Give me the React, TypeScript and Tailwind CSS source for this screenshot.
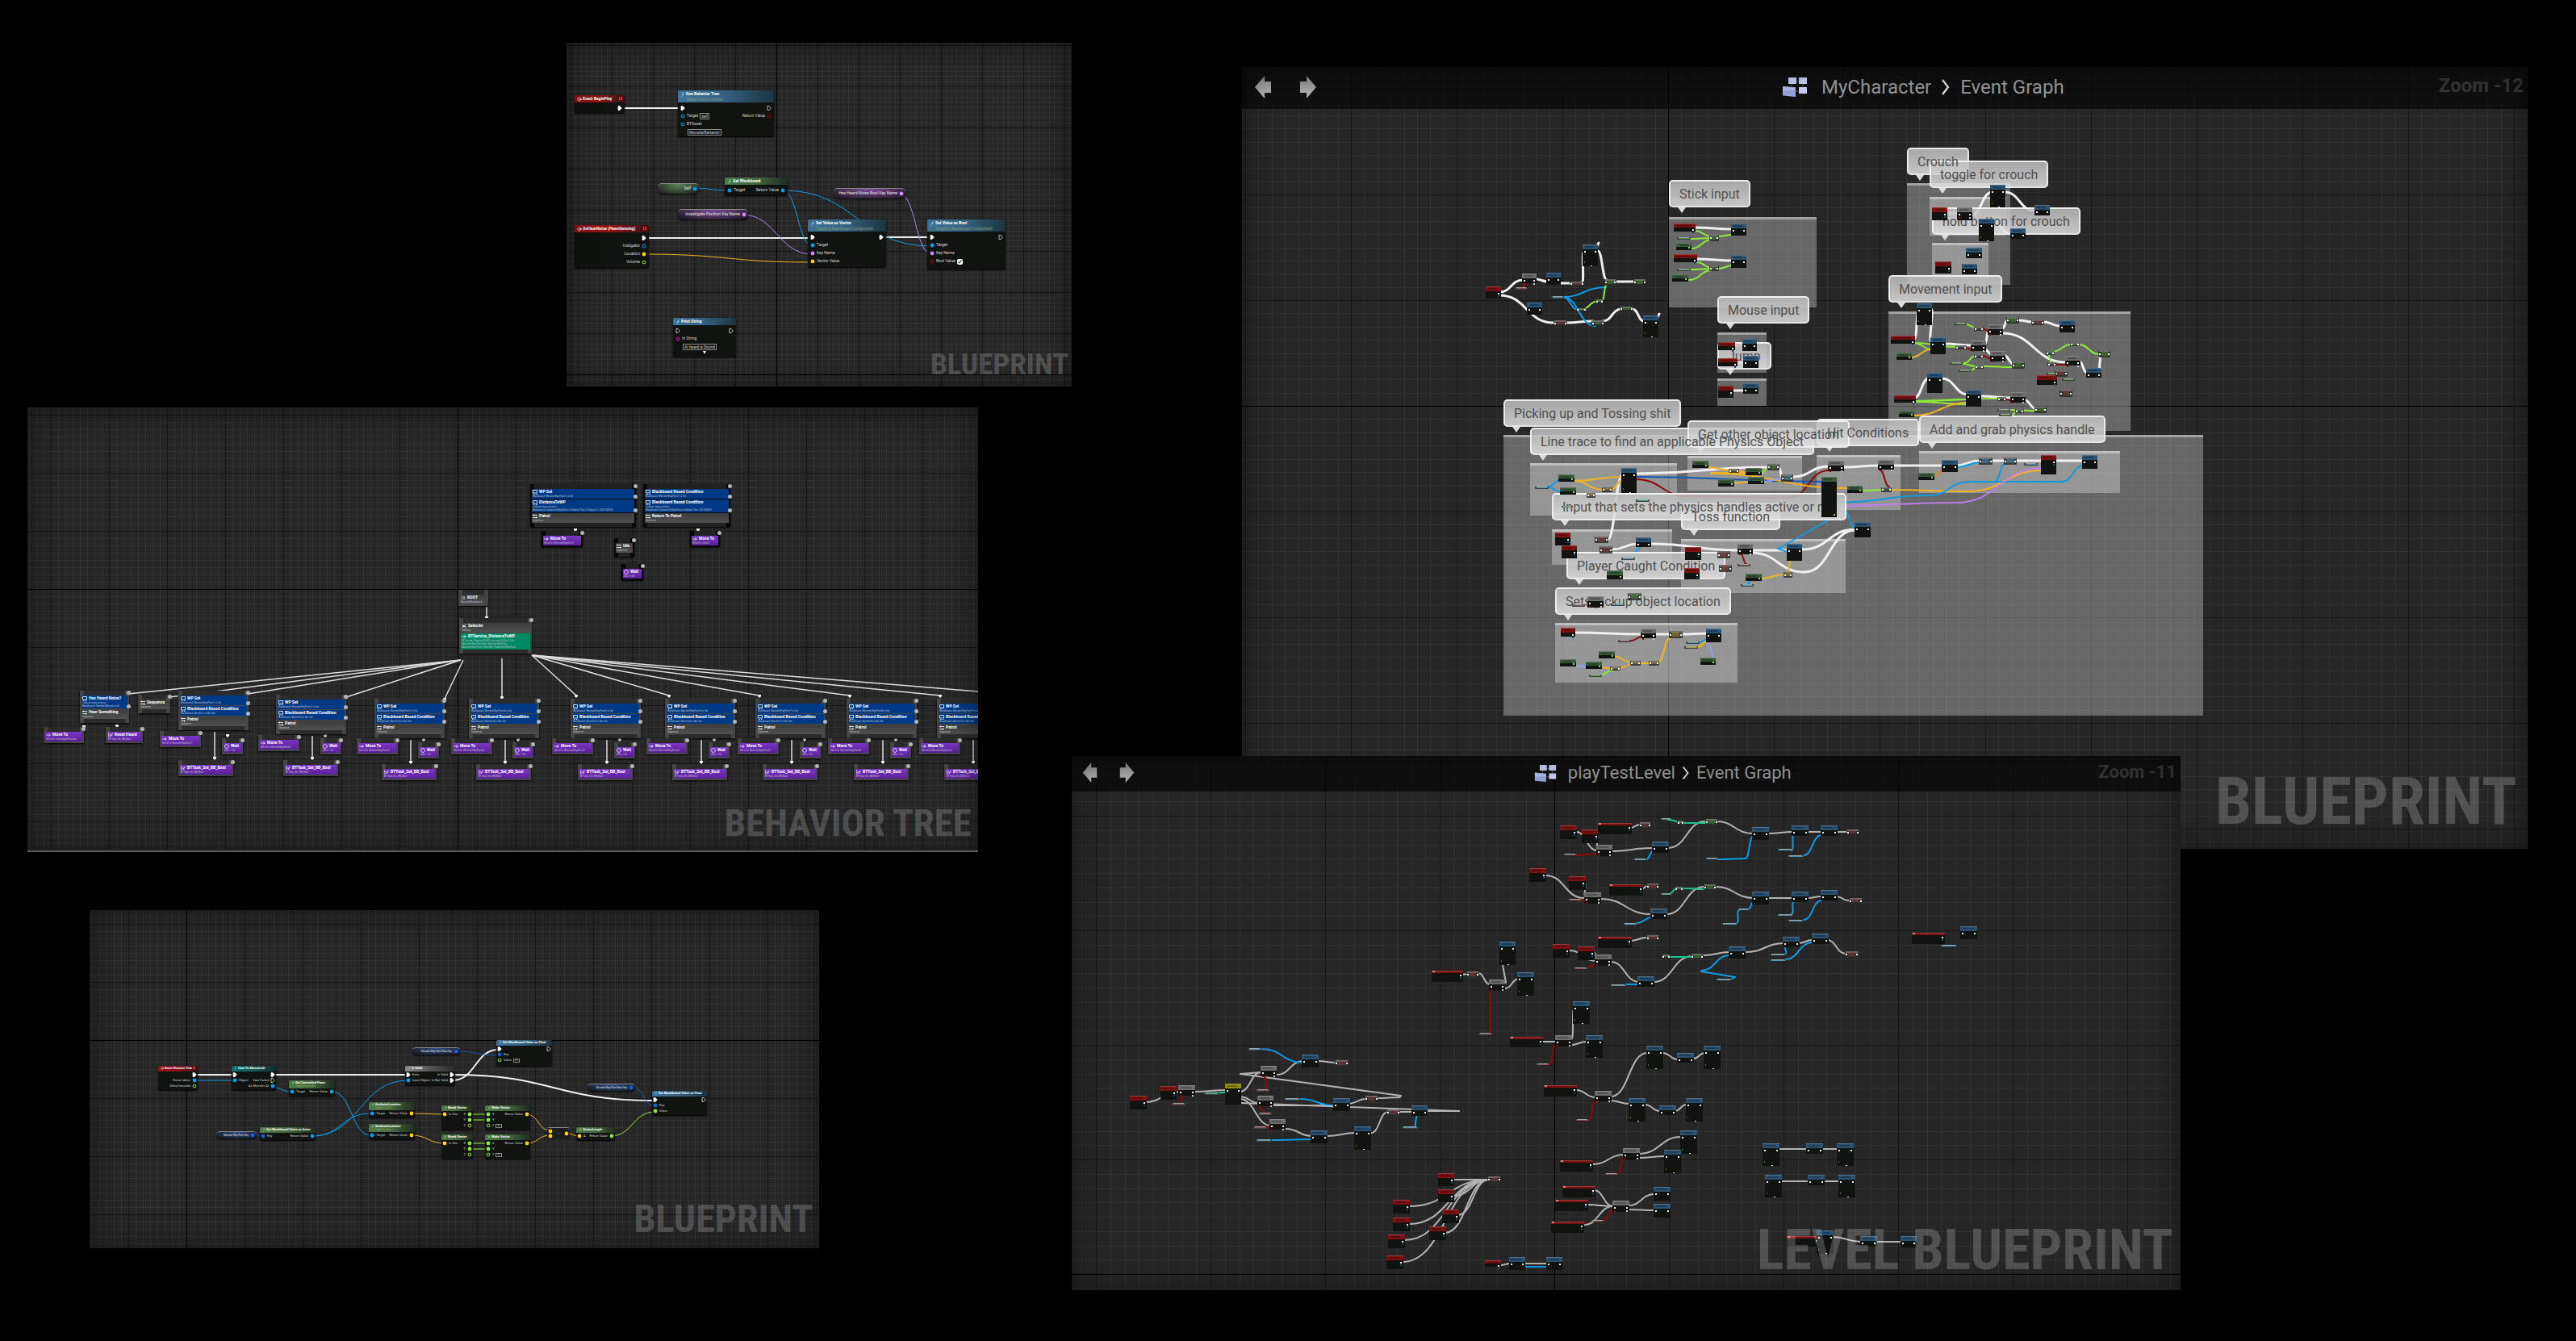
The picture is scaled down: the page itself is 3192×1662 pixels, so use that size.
import React from 'react';

/* ---------- coordinates ---------- */

// A sector of a graph: its own units (sx, sy) and its origin on the canvas.
type Sector = { ox: number; oy: number; sx: number; sy: number };

const px = (s: Sector, x: number) => Math.round(s.ox + x * s.sx);
const py = (s: Sector, y: number) => Math.round(s.oy + y * s.sy);

const rowsOf = (src: string) =>
  src
    .split(/[\n;]/)
    .map((l) => l.trim())
    .filter(Boolean)
    .map((l) => l.split(/\s+/));

const WIRE: Record<string, string> = {
  w: '#f0f0f0',
  b: '#0f9be6',
  B: '#1458b8',
  g: '#8fe93a',
  y: '#f0b323',
  r: '#8c0a0c',
  p: '#bd7ff0',
  q: '#93a0ee',
  o: '#f07a1a',
  t: '#1fc48c',
};

/* ---------- canvas pieces ---------- */

function Grid({ id, step, cells, x, y }: { id: string; step: number; cells: number; x: number; y: number }) {
  const minors = Array.from({ length: cells - 1 }, (_, i) => Math.round(((i + 1) * step) / cells));
  return (
    <svg className="absolute inset-0 size-full" aria-hidden="true">
      <defs>
        <pattern id={id} x={x} y={y} width={step} height={step} patternUnits="userSpaceOnUse">
          {minors.map((m) => (
            <path key={m} d={`M${m} 0h1v${step}h-1zM0 ${m}h${step}v1h-${step}z`} fill="#323232" />
          ))}
          <path d={`M0 0h${step}v1h-${step}zM0 0h1v${step}h-1z`} fill="#171717" />
        </pattern>
      </defs>
      <rect width="100%" height="100%" fill={`url(#${id})`} />
      <rect x={x} width="1" height="100%" fill="#000" />
      <rect y={y} width="100%" height="1" fill="#000" />
    </svg>
  );
}

function Wires({ s, src, width, dim }: { s: Sector; src: string; width: number; dim?: boolean }) {
  return (
    <svg className="absolute inset-0 size-full" fill="none" strokeWidth={width} aria-hidden="true">
      {rowsOf(src).map(([c, ...n], i) => {
        const straight = c.endsWith('-');
        const key = c[0];
        const [x1, y1, x2, y2] = [px(s, +n[0]), py(s, +n[1]), px(s, +n[2]), py(s, +n[3])];
        const k = Math.max(Math.abs(x2 - x1) / 2, 4);
        const d = straight ? `M${x1} ${y1}L${x2} ${y2}` : `M${x1} ${y1}C${x1 + k} ${y1} ${x2 - k} ${y2} ${x2} ${y2}`;
        return <path key={i} d={d} stroke={dim && key === 'w' ? '#b4b4b4' : WIRE[key]} strokeLinecap="round" />;
      })}
    </svg>
  );
}

const HEAD: Record<string, string> = {
  red: '#7d1012',
  blue: '#2a5170',
  green: '#39593a',
  gray: '#6b6b6b',
  yel: '#8d8a0c',
};
const TINT: Record<string, string> = { mg: '#4b8a35', mr: '#8a3a3c', mb: '#4a8fbb', my: '#b08a2a', m: '#555' };
const PILL: Record<string, string> = { pr: '#8a5050', pb: '#4f96b5', pg: '#5d9440', pt: '#3fa080', py: '#b39440' };

// Far-zoom nodes: a coloured cap, a dark body and the exec pins.
function MiniNodes({ s, src }: { s: Sector; src: string }) {
  return (
    <svg className="pointer-events-none absolute inset-0 z-20 size-full" aria-hidden="true">
      {rowsOf(src).map(([kind, ...n], i) => {
        const x = px(s, +n[0]);
        const y = py(s, +n[1]);
        const w = Math.round(+n[2] * s.sx);
        const h = Math.round(+n[3] * s.sy);
        if (PILL[kind]) {
          return (
            <g key={i}>
              <rect x={x} y={y} width={w} height={Math.max(h, 2)} rx="1" fill="#3c4040" />
              <rect x={x + 2} y={y} width={w - 4} height="1" fill="#9aa4a4" />
              <rect x={x + 2} y={y + 1} width={w - 3} height="1" fill={PILL[kind]} />
            </g>
          );
        }
        if (TINT[kind]) {
          return (
            <g key={i}>
              <rect x={x} y={y} width={w} height={h} rx="1" fill="#2c2e2b" fillOpacity="0.85" />
              <rect x={x + 1} y={y} width={w - 2} height="2" fill="#858585" fillOpacity="0.7" />
              <rect x={x + Math.round(w / 4)} y={y + 1} width={Math.round(w / 2)} height={Math.max(h - 3, 2)} fill={TINT[kind]} fillOpacity="0.5" />
              <rect x={x + 1} y={y + Math.round(h / 2) - 1} width="2" height="2" fill="#eee" />
              <rect x={x + w - 3} y={y + Math.round(h / 2) - 1} width="2" height="2" fill="#eee" />
            </g>
          );
        }
        const cap = w > 34 && h < 16 ? 3 : Math.min(6, Math.round(h / 2));
        const pin = y + cap + 2;
        return (
          <g key={i}>
            <rect x={x} y={y} width={w} height={h} fill="#101310" />
            <rect x={x} y={y} width={w} height={cap} fill={HEAD[kind]} />
            <rect x={x} y={y} width={w} height="1" fill="#fff" fillOpacity="0.18" />
            {cap > 3 ? (
              <rect x={x + 3} y={y + 2} width={w - 8} height="2" fill="#000" fillOpacity="0.25" />
            ) : (
              <rect x={x + 1} y={y} width="3" height="2" fill="#e08080" />
            )}
            {kind !== 'red' && kind !== 'green' && <rect x={x + 2} y={pin} width="2" height="2" fill="#eee" />}
            {kind !== 'green' && <rect x={x + w - 4} y={pin} width="2" height="2" fill="#eee" />}
            {kind === 'red' && <rect x={x + w - 4} y={pin + 3} width="2" height="2" fill="#0b4f80" />}
            {kind === 'gray' && <rect x={x + w - 4} y={pin + 4} width="2" height="2" fill="#ccc" />}
            {kind === 'gray' && <rect x={x + 2} y={pin + 4} width="2" height="2" fill="#8c0a0c" />}
            {kind === 'green' && <rect x={x + w - 4} y={y + h - 4} width="2" height="2" fill="#9bd45a" />}
            {kind === 'blue' && h > 26 && <rect x={x + 2} y={y + h - 6} width="1" height="2" fill="#4c7a2a" />}
            {kind === 'blue' && h > 26 && <rect x={x + Math.round(w / 2)} y={y + h - 1} width="2" height="1" fill="#ddd" />}
          </g>
        );
      })}
    </svg>
  );
}

/* ---------- detailed blueprint nodes ---------- */

const PIN: Record<string, string> = { b: '#00a2f0', B: '#0f62d8', g: '#8fe93a', y: '#ffd012', r: '#a00a0c', p: '#cf86ff', m: '#e010c8' };

function Pin({ code }: { code: string }) {
  if (!code) return <span className="w-[5px]" />;
  const hollow = code.endsWith('-');
  if (code[0] === 'e') {
    return (
      <svg className="size-[6px] shrink-0" viewBox="0 0 6 6" aria-hidden="true">
        <path d="M1 .5H3L5.3 3 3 5.5H1z" fill={hollow ? 'none' : '#fff'} stroke="#fff" strokeWidth=".7" />
      </svg>
    );
  }
  return (
    <svg className="size-[6px] shrink-0" viewBox="0 0 6 6" aria-hidden="true">
      <circle cx="3" cy="3" r={hollow ? 1.9 : 2.4} fill={hollow ? 'none' : PIN[code[0]]} stroke={PIN[code[0]]} strokeWidth={hollow ? 1 : 0} />
    </svg>
  );
}

type Row = [string, string, string, string, string?];
type NodeData = { x: number; y: number; w: number; h: number; tone: string; title: string; sub?: string; rows: Row[] };

const TONE: Record<string, string> = {
  red: 'bg-linear-to-r from-[#8f1418] via-[#8a1216] to-[#3c1214]',
  blue: 'bg-linear-to-r from-[#3d7399] via-[#34617f] to-[#1d3440]',
  green: 'bg-linear-to-r from-[#4c7a4a] via-[#44693f] to-[#1f2e20]',
  gray: 'bg-linear-to-r from-[#8a8a8a] via-[#555] to-[#2b2b2b]',
  teal: 'bg-linear-to-r from-[#0f6f72] via-[#12595b] to-[#142c2d]',
};

function BlueprintNode({ s, n, small }: { s: Sector; n: NodeData; small?: boolean }) {
  const event = n.tone === 'red';
  return (
    <article
      className="absolute overflow-hidden rounded-[2px] bg-[#101310] text-[#d4d4d4] shadow-[0_1px_2px_#000]"
      style={{ left: px(s, n.x), top: py(s, n.y), width: Math.round(n.w * s.sx), height: Math.round(n.h * s.sy) }}
    >
      <header className={`flex gap-px px-[3px] ${TONE[n.tone]} ${small ? (n.sub ? 'h-[10px]' : 'h-[7px]') : n.sub ? 'h-[15px]' : 'h-[9px]'}`}>
        <svg className={small ? 'mt-px size-[4px]' : 'mt-[2px] size-[6px]'} viewBox="0 0 6 6" fill="none" aria-hidden="true">
          {event ? (
            <path d="M3 .6 5.4 3 3 5.4.6 3zM2.4 3H6" stroke="#fff" strokeWidth=".8" />
          ) : (
            <path d="M4.8.7C3.6.2 3.4 1.2 3.1 3S2.4 5.7 1.2 5.3M2 2.5h2.4" stroke={n.tone === 'green' ? '#a6f08c' : '#8fd0ff'} strokeWidth=".8" />
          )}
        </svg>
        <div className="min-w-0 flex-1 whitespace-nowrap">
          <h3 className={small ? 'text-[4px] leading-[6px] font-bold text-white' : 'text-[5px] leading-[9px] font-bold text-white'}>{n.title}</h3>
          {n.sub && <p className={small ? 'text-[3px] leading-[3px] text-[#9aa45a]' : 'text-[5px] leading-[5px] text-[#86a07c] italic'}>{n.sub}</p>}
        </div>
        {event && <i className={small ? 'mt-px size-[3px] border border-[#ff3030]' : 'mt-[2px] size-[4px] border border-[#ff3030] bg-[#400]'} />}
      </header>
      <div className={small ? 'px-px pt-px text-[4px]' : 'px-[3px] pt-[2px] text-[5px]'}>
        {n.rows.map((r, i) => (
          <div key={i} className={`flex items-center gap-[2px] whitespace-nowrap ${small ? 'h-[7px]' : 'h-[10px]'}`}>
            <Pin code={r[0]} />
            <span>{r[1]}</span>
            {r[4] === 'check' ? (
              <input type="checkbox" aria-label={r[1]} defaultChecked className="size-[7px] accent-white" />
            ) : r[4] ? (
              <input
                type="text"
                aria-label={r[1] || r[4]}
                defaultValue={r[4]}
                size={1}
                className={`border border-[#8a8a8a] bg-transparent px-px ${r[4].length > 6 ? 'h-[8px] w-[42px]' : small ? 'h-[5px] w-[8px]' : 'h-[8px] w-[12px]'}`}
              />
            ) : null}
            <span className="ml-auto">{r[2]}</span>
            <Pin code={r[3]} />
          </div>
        ))}
      </div>
    </article>
  );
}

function VariablePill({ s, x, y, w, h, label, tone, pin, small }: { s: Sector; x: number; y: number; w: number; h: number; label: string; tone: string; pin: string; small?: boolean }) {
  return (
    <div
      className={`absolute flex items-center justify-end gap-[2px] rounded-[5px] border-t border-[#8a8a8a] bg-radial-[at_50%_0%] to-[#151515] pr-[2px] whitespace-nowrap text-[#e4e4e4] shadow-[0_1px_2px_#000] ${tone} ${small ? 'text-[3px]' : 'text-[5px]'}`}
      style={{ left: px(s, x), top: py(s, y), width: Math.round(w * s.sx), height: Math.round(h * s.sy) }}
    >
      <span>{label}</span>
      <Pin code={pin} />
    </div>
  );
}

/* ---------- panels ---------- */

function Panel({ className, mark, markClass, children }: { className: string; mark: string; markClass: string; children: React.ReactNode }) {
  return (
    <section className={`relative isolate overflow-hidden bg-[#262626] ${className}`} aria-label={mark}>
      {children}
      <div className="pointer-events-none absolute inset-0 z-20 shadow-[inset_0_0_40px_rgba(0,0,0,0.45)]" />
      <h2 className={`pointer-events-none absolute z-30 font-['Roboto_Condensed','Liberation_Sans_Narrow',Roboto,sans-serif] leading-none font-bold whitespace-nowrap text-white/20 ${markClass}`}>
        {mark}
      </h2>
    </section>
  );
}

const A: Sector = { ox: -12, oy: -13, sx: 0.4145, sy: 1 / 3 };

const AI_NODES: NodeData[] = [
  { x: 53, y: 235, w: 149, h: 67, tone: 'red', title: 'Event BeginPlay', rows: [['', '', '', 'e']] },
  {
    x: 363, y: 215, w: 287, h: 171, tone: 'blue', title: 'Run Behavior Tree', sub: 'Target is AIController',
    rows: [['e', '', '', 'e-'], ['b-', 'Target', 'Return Value', 'r-', 'self'], ['b-', 'BTAsset', '', ''], ['', '', '', '', 'MonsterBehavior']],
  },
  { x: 503, y: 541, w: 188, h: 67, tone: 'green', title: 'Get Blackboard', rows: [['b', 'Target', 'Return Value', 'b']] },
  {
    x: 53, y: 716, w: 222, h: 160, tone: 'red', title: 'OnHearNoise (PawnSensing)',
    rows: [['', '', '', 'e'], ['', '', 'Instigator', 'b-'], ['', '', 'Location', 'y'], ['', '', 'Volume', 'g-']],
  },
  {
    x: 750, y: 697, w: 235, h: 177, tone: 'blue', title: 'Set Value as Vector', sub: 'Target is Blackboard Component',
    rows: [['e', '', '', 'e'], ['b', 'Target', '', ''], ['p', 'Key Name', '', ''], ['y', 'Vector Value', '', '']],
  },
  {
    x: 1107, y: 697, w: 233, h: 187, tone: 'blue', title: 'Set Value as Bool', sub: 'Target is Blackboard Component',
    rows: [['e', '', '', 'e-'], ['b', 'Target', '', ''], ['p', 'Key Name', '', ''], ['r-', 'Bool Value', '', '', 'check']],
  },
  {
    x: 348, y: 1062, w: 188, h: 143, tone: 'blue', title: 'Print String',
    rows: [['e-', '', '', 'e-'], ['m-', 'In String', '', ''], ['', '', '', '', 'AI heard a Sound']],
  },
];

function AiBlueprint() {
  return (
    <Panel className="aspect-[626/426] w-[47.14%] self-end" mark="BLUEPRINT" markClass="right-[4px] bottom-[9px] text-[37px]">
      <Grid id="grid-ai" step={51} cells={8} x={260} y={411} />
      <Wires s={A} width={2} src="w 188 281 375 281; w 258 764 765 764; w 968 763 1120 763" />
      <Wires
        s={A}
        width={1}
        src={`b 408 580 515 588; b 675 588 765 794; b 675 588 1120 794; p 552 677 765 824
          p 1025 600 1120 824; y 258 826 765 855`}
      />
      {AI_NODES.map((n) => (
        <BlueprintNode key={`${n.x}-${n.y}`} s={A} n={n} />
      ))}
      <svg className="absolute size-[4px]" viewBox="0 0 4 4" style={{ left: px(A, 437), top: py(A, 1184) }} aria-hidden="true">
        <path d="M0 0h4L2 4z" fill="#fff" />
      </svg>
      <VariablePill s={A} x={302} y={560} w={124} h={40} label="Self" tone="from-[#5d8a58]" pin="b" />
      <VariablePill s={A} x={363} y={657} w={209} h={40} label="Investigate Position Key Name" tone="from-[#7d4d9c]" pin="p" />
      <VariablePill s={A} x={828} y={580} w={214} h={40} label="Has Heard Noise Bool Key Name" tone="from-[#7d4d9c]" pin="p" />
    </Panel>
  );
}

/* ---------- behavior tree ---------- */

type Block = { c: 'blue' | 'gray' | 'green' | 'purple'; t: string; icon: string; subs: string[] };

const BLOCK = {
  blue: 'bg-[#003a86]',
  gray: 'bg-linear-to-b from-[#3c3c3c] to-[#505050]',
  green: 'bg-[#008a62]',
  purple: 'bg-linear-to-b from-[#7a35c4] to-[#5b2199]',
};

const ICON: Record<string, string> = {
  cond: 'M.5 .5h5v3.5h-5zM1 5.5h1.5M4 5.5h1.5',
  seq: 'M0 1.5h6M0 4.5h6M1.5 .5v2M4.5 3.5v2',
  move: 'M0 3h5M3.5 1.5 5.3 3 3.5 4.5',
  wait: 'M3 .6A2.4 2.4 0 1 1 2.9 .6',
  task: 'M.8 .5v5M5.5 1 3 5M3 2v2',
  sel: 'M.5 .5 5.5 5.5M5.5 .5 .5 5.5M1 3h4',
  root: 'M1 1h1M4 1v4M1 5h1M1 3h1',
};

function TreeNode({ x, y, w, blocks, loose, task, dots = true }: { x: number; y: number; w: number; blocks: Block[]; loose?: boolean; task?: boolean; dots?: boolean }) {
  return (
    <article className={`absolute px-[2px] shadow-[0_1px_2px_#000] ${loose ? 'bg-[#080808]' : 'bg-[#454545]'}`} style={{ left: x, top: y, width: w }}>
      <div className={`mx-[3px] h-[6px] ${loose ? 'bg-[#222]' : 'bg-[#2b2b2b]'}`} />
      {dots && <i className="absolute top-0 -right-[2px] size-[5px] rounded-full bg-[#b4b4b4]" />}
      <div className="flex flex-col gap-px">
        {blocks.map((b, i) => (
          <div key={i} className={`relative px-px pb-px whitespace-nowrap ${BLOCK[b.c]}`}>
            <div className="flex items-center gap-[2px]">
              <svg className="size-[6px] shrink-0" viewBox="0 0 6 6" fill="none" stroke="#fff" strokeWidth=".8" aria-hidden="true">
                <path d={ICON[b.icon]} />
              </svg>
              <h3 className="text-[5px] leading-[7px] font-bold text-white">{b.t}</h3>
            </div>
            {b.subs.map((t, j) => (
              <p key={j} className="overflow-hidden text-[3px] leading-[4px] text-[#b7bfcc]">{t}</p>
            ))}
            {b.c === 'blue' && <i className="absolute -right-[4px] bottom-0 size-[5px] rounded-full bg-[#b4b4b4]" />}
          </div>
        ))}
      </div>
      {task ? <div className="h-[2px]" /> : <div className={`mx-[3px] h-[5px] ${loose ? 'bg-[#222]' : 'bg-[#2b2b2b]'}`} />}
    </article>
  );
}

const cond = (t: string, ...subs: string[]): Block => ({ c: 'blue', t, icon: 'cond', subs });
const seq = (t: string): Block => ({ c: 'gray', t, icon: 'seq', subs: ['Sequence'] });
const move = (to: string): Block => ({ c: 'purple', t: 'Move To', icon: 'move', subs: [`MoveTo: ${to}`] });
const wait = (s: string): Block => ({ c: 'purple', t: 'Wait', icon: 'wait', subs: [`Wait: ${s}`] });
const task = (t: string): Block => ({ c: 'purple', t, icon: 'task', subs: ['BTTask_Set_BB_Bool'] });

// One patrol branch per way point: branch, move, wait and task positions.
const PATROLS = [
  { x: 187, y: 351, mx: 164, my: 401, wx: 241, wy: 410, tx: 187, ty: 437 },
  { x: 308, y: 356, mx: 286, my: 406, wx: 363, wy: 410, tx: 317, ty: 437 },
  { x: 430, y: 361, mx: 408, my: 410, wx: 484, wy: 415, tx: 439, ty: 442 },
  { x: 547, y: 361, mx: 525, my: 410, wx: 601, wy: 415, tx: 556, ty: 442 },
  { x: 673, y: 361, mx: 650, my: 410, wx: 727, wy: 415, tx: 682, ty: 442 },
  { x: 790, y: 361, mx: 767, my: 410, wx: 844, wy: 415, tx: 799, ty: 442 },
  { x: 902, y: 361, mx: 880, my: 410, wx: 957, wy: 415, tx: 911, ty: 442 },
  { x: 1015, y: 361, mx: 992, my: 410, wx: 1069, wy: 415, tx: 1024, ty: 442 },
  { x: 1127, y: 361, mx: 1105, my: 410, wx: 1182, wy: 415, tx: 1136, ty: 442 },
];

const TREE_LINKS: [number, number, number, number][] = [
  [537, 313, 125, 355], [537, 313, 176, 359], [537, 313, 273, 355], [537, 313, 395, 359], [540, 313, 517, 361],
  [588, 311, 588, 359], [625, 307, 680, 357], [625, 307, 795, 357], [625, 307, 907, 357], [625, 307, 1019, 357],
  [625, 307, 1131, 357], [625, 307, 1190, 353], [569, 247, 569, 260],
];

const PATROL_LINKS = PATROLS.map((p) => [p.x + 45, p.y + 51, p.x + 45, p.ty - 3]);

const LINK_TIPS = [
  ...[...TREE_LINKS, ...PATROL_LINKS].map((l) => [l[2], l[3]]),
  ...PATROLS.flatMap((p) => [[p.x + 26, p.y + 51], [p.x + 61, p.wy - 4]]),
  [111, 394], [70, 395], [679, 151], [831, 151],
];

function BehaviorTree() {
  return (
    <Panel className="mt-[26px] ml-[34px] aspect-[1178/551] w-[88.7%] border-b-2 border-[#5a5a5a]" mark="BEHAVIOR TREE" markClass="right-[8px] bottom-[11px] text-[47px]">
      <Grid id="grid-bt" step={72} cells={8} x={533} y={225} />
      <svg className="absolute inset-0 size-full" aria-hidden="true">
        {[...TREE_LINKS, ...PATROL_LINKS].map(([x1, y1, x2, y2], i) => (
          <path key={i} d={`M${x1} ${y1}L${x2} ${y2}`} stroke="#dedede" strokeWidth="1.5" />
        ))}
        {LINK_TIPS.map(([x, y], i) => (
          <path key={i} d={`M${x - 2} ${y - 1}h4v2l-2 2-2-2z`} fill="#f2f2f2" />
        ))}
      </svg>
      <TreeNode x={623} y={95} w={131} loose blocks={[cond('WP Set', 'Blackboard: MonsterWayPoint1 is Set'), cond('DistanceToWP', '( aborts lower priority )', 'Blackboard: DistanceToWayPoint is Greater Than Or Equal To 1000.000000'), seq('Patrol')]} />
      <TreeNode x={763} y={95} w={108} loose blocks={[cond('Blackboard Based Condition', 'Blackboard: MonsterWayPoint1 is Set'), cond('Blackboard Based Condition', '( aborts lower priority )', 'Blackboard: DistanceToWayPoint is Greater Than 100.000000'), seq('Return To Patrol')]} />
      <TreeNode x={637} y={153} w={51} loose task blocks={[move('MonsterWayPoint1')]} />
      <TreeNode x={821} y={153} w={37} loose task blocks={[move('invalid')]} />
      <TreeNode x={727} y={162} w={25} loose blocks={[seq('Idle')]} />
      <TreeNode x={736} y={194} w={27} loose task blocks={[wait('5.0s')]} />
      <TreeNode x={534} y={226} w={37} dots={false} task blocks={[{ c: 'gray', t: 'ROOT', icon: 'root', subs: ['MonsterBlackboard'] }]} />
      <TreeNode
        x={535}
        y={261}
        w={90}
        blocks={[
          { c: 'gray', t: 'Selector', icon: 'sel', subs: ['Selector'] },
          { c: 'green', t: 'BTService_DistanceToWP', icon: 'move', subs: ['BTService_DistanceToWP: tick every 0.40s..0.60s', 'Monster Way Point Key: MonsterWayPoint', 'Monster Way Point Float Key: DistanceToWayPoint'] },
        ]}
      />
      <TreeNode x={65} y={351} w={61} blocks={[cond('Has Heard Noise?', '( aborts lower priority )', 'Blackboard: HasHeardNoise is Set'), seq('Hear Something')]} />
      <TreeNode x={137} y={356} w={40} blocks={[seq('Sequence')]} />
      <TreeNode x={20} y={396} w={50} task blocks={[move('InvestigatePosition')]} />
      <TreeNode x={97} y={396} w={46} task blocks={[task('Reset Heard')]} />
      {PATROLS.map((p, i) => (
        <React.Fragment key={p.x}>
          <TreeNode x={p.x} y={p.y} w={87} blocks={[cond('WP Set', `Blackboard: MonsterWayPoint${i + 1} is Set`), cond('Blackboard Based Condition', `Blackboard: MoveTo${i + 1} is Not Set`), seq('Patrol')]} />
          <TreeNode x={p.mx} y={p.my} w={51} task blocks={[move(`MonsterWayPoint${i + 1}`)]} />
          <TreeNode x={p.wx} y={p.wy} w={26} task blocks={[wait('1.0s')]} />
          <TreeNode x={p.tx} y={p.ty} w={68} task blocks={[task('BTTask_Set_BB_Bool')]} />
        </React.Fragment>
      ))}
    </Panel>
  );
}

/* ---------- service blueprint ---------- */

const S: Sector = { ox: -11, oy: -8, sx: 0.5867, sy: 1 / 3 };

const breakVec: Row[] = [['y', 'In Vec', 'X', 'g'], ['', '', 'Y', 'g'], ['', '', 'Z', 'g-']];
const makeVec: Row[] = [['g', 'X', 'Return Value', 'y'], ['g', 'Y', '', ''], ['g-', 'Z', '', '', '0.0']];

const SERVICE_NODES: NodeData[] = [
  { x: 164, y: 603, w: 84, h: 89, tone: 'red', title: 'Event Receive Tick', rows: [['', '', '', 'e'], ['', '', 'Owner Actor', 'b'], ['', '', 'Delta Seconds', 'g-']] },
  { x: 318, y: 603, w: 94, h: 89, tone: 'teal', title: 'Cast To MonsterAI', rows: [['e', '', '', 'e'], ['b', 'Object', 'Cast Failed', 'e-'], ['', '', 'As Monster AI', 'b']] },
  { x: 440, y: 657, w: 97, h: 56, tone: 'green', title: 'Get Controlled Pawn', sub: 'Target is controller', rows: [['b', 'Target', 'Return Value', 'b']] },
  { x: 685, y: 603, w: 105, h: 71, tone: 'gray', title: 'Is Valid', rows: [['e', 'Exec', 'Is Valid', 'e'], ['b', 'Input Object', 'Is Not Valid', 'e']] },
  { x: 877, y: 508, w: 117, h: 95, tone: 'blue', title: 'Set Blackboard Value as Float', rows: [['e', '', '', 'e-'], ['B', 'Key', '', ''], ['g-', 'Value', '', '', '0.0']] },
  { x: 1207, y: 697, w: 116, h: 90, tone: 'blue', title: 'Set Blackboard Value as Float', rows: [['e', '', '', 'e-'], ['B', 'Key', '', ''], ['g', 'Value', '', '']] },
  { x: 608, y: 738, w: 97, h: 57, tone: 'green', title: 'GetActorLocation', sub: 'Target is Actor', rows: [['b', 'Target', 'Return Value', 'y']] },
  { x: 608, y: 818, w: 97, h: 57, tone: 'green', title: 'GetActorLocation', sub: 'Target is Actor', rows: [['b', 'Target', 'Return Value', 'y']] },
  { x: 378, y: 832, w: 118, h: 47, tone: 'green', title: 'Get Blackboard Value as Actor', rows: [['B', 'Key', 'Return Value', 'b']] },
  { x: 762, y: 750, w: 67, h: 91, tone: 'green', title: 'Break Vector', rows: breakVec },
  { x: 762, y: 858, w: 67, h: 91, tone: 'green', title: 'Break Vector', rows: breakVec },
  { x: 854, y: 750, w: 96, h: 91, tone: 'green', title: 'Make Vector', rows: makeVec },
  { x: 854, y: 858, w: 96, h: 91, tone: 'green', title: 'Make Vector', rows: makeVec },
  { x: 1046, y: 832, w: 82, h: 47, tone: 'green', title: 'VectorLength', rows: [['y', 'A', 'Return Value', 'g']] },
];

function ServiceBlueprint() {
  return (
    <Panel className="mt-[72px] ml-[111px] aspect-[904/419] w-[68.1%]" mark="BLUEPRINT" markClass="right-[8px] bottom-[12px] text-[48px]">
      <Grid id="grid-svc" step={72} cells={8} x={120} y={161} />
      <Wires s={S} width={2} src="w 245 637 322 637; w 408 637 690 637; w 785 637 1212 731; w 785 658 882 543" />
      <Wires
        s={S}
        width={1}
        src={`b 242 658 322 658; b 408 683 445 700; b 532 700 612 862; b 490 864 612 781; b 490 864 690 658
          B 795 548 882 564; B 1165 682 1212 752; B 366 858 384 864; y 698 781 768 783; y 698 862 768 891
          g 820 783 860 783; g 820 804 860 804; g 820 891 860 891; g 820 912 860 912
          y 942 783 990 842; y 942 891 990 862; y 1024 852 1052 864; g 1120 864 1212 774`}
      />
      {SERVICE_NODES.map((n) => (
        <BlueprintNode key={`${n.x}-${n.y}`} s={S} n={n} small />
      ))}
      <VariablePill s={S} x={287} y={845} w={85} h={28} label="Monster Way Point Key" tone="from-[#2d4f8a]" pin="B" small />
      <VariablePill s={S} x={701} y={535} w={101} h={27} label="Monster Way Point Float Key" tone="from-[#2d4f8a]" pin="B" small />
      <VariablePill s={S} x={1070} y={669} w={101} h={27} label="Monster Way Point Float Key" tone="from-[#2d4f8a]" pin="B" small />
      <div
        className="absolute flex h-[15px] w-[28px] items-center justify-between rounded-[3px] border-t border-[#888] bg-[#1c1e1b] px-px text-[5px] text-white"
        style={{ left: px(S, 985), top: py(S, 832) }}
      >
        <span className="flex flex-col">
          <Pin code="y" />
          <Pin code="y" />
        </span>
        <span>-</span>
        <Pin code="y" />
      </div>
    </Panel>
  );
}

/* ---------- event graph windows ---------- */

function Arrow({ id, flip, compact }: { id: string; flip?: boolean; compact?: boolean }) {
  return (
    <svg className={`${compact ? 'h-[27px] w-[21px]' : 'h-[30px] w-[24px]'} ${flip ? '-scale-x-100' : ''}`} viewBox="0 0 24 30" preserveAspectRatio="none" aria-hidden="true">
      <defs>
        <linearGradient id={id} x2="0" y2="1">
          <stop offset="0" stopColor="#8c8c8c" />
          <stop offset="1" stopColor="#b8b8b8" />
        </linearGradient>
      </defs>
      <path d="M2 15 14 1V8H22V22H14V29z" fill={`url(#${id})`} />
    </svg>
  );
}

function GraphHeader({ name, zoom, compact }: { name: string; zoom: string; compact?: boolean }) {
  return (
    <header
      className={`absolute inset-x-0 top-0 z-20 grid items-center bg-black/60 pb-[3px] font-[Roboto,sans-serif] text-[#9a9a9a] ${
        compact ? 'h-[44px] grid-cols-[41.7%_1fr_auto] text-[22px]' : 'h-[52px] grid-cols-[42%_1fr_auto] text-[24px]'
      }`}
    >
      <div className={compact ? 'flex gap-[25px] pl-[12px]' : 'flex gap-[32px] pl-[14px]'}>
        <button type="button" aria-label="Back">
          <Arrow id={`${name}-back`} compact={compact} />
        </button>
        <button type="button" aria-label="Forward">
          <Arrow id={`${name}-next`} compact={compact} flip />
        </button>
      </div>
      <nav aria-label="Breadcrumb" className="flex items-center whitespace-nowrap">
        <svg className={compact ? 'mr-[14px] h-[22px] w-[28px]' : 'mr-[17px] h-[25px] w-[32px]'} viewBox="0 0 32 25" aria-hidden="true">
          <path d="M12 6V14M26 6V14M14 6h10M16 18h8" stroke="#5b6070" strokeWidth="1" />
          <path d="M8 1h10v8H8zM21 1h10v8H21zM21 13h10v8H21z" fill="#c9d2f6" />
          <path d="M1 12l16 1.5V25L1 23.5z" fill="#93a4dc" />
          <path d="M1 12l16 1.5V17L1 18z" fill="#aebbe8" />
        </svg>
        <a href="#graph">{name}</a>
        <svg className={compact ? 'mx-[8px] h-[18px] w-[10px]' : 'mx-[12px] h-[20px] w-[12px]'} viewBox="0 0 12 20" fill="none" aria-hidden="true">
          <path d="M2 1l7 9-7 9" stroke="#e6e6e6" strokeWidth="2.2" />
        </svg>
        <a href="#event-graph">Event Graph</a>
      </nav>
      <span className="pr-[5px] pb-[3px] font-bold text-[#363636]">{zoom}</span>
    </header>
  );
}

const C1: Sector = { ox: -9, oy: -13, sx: 0.523, sy: 1 / 3 };
const C2: Sector = { ox: 741, oy: -13, sx: 0.5485, sy: 1 / 3 };
const C3: Sector = { ox: 301, oy: 397, sx: 0.574, sy: 1 / 3 };

const BOXES: [Sector, number, number, number, number][] = [
  [C1, 1029, 597, 1378, 932],
  [C1, 1143, 1026, 1260, 1177],
  [C1, 1143, 1197, 1260, 1299],
  [C2, 152, 472, 384, 850],
  [C2, 202, 521, 375, 665],
  [C2, 208, 694, 335, 828],
  [C2, 110, 947, 656, 1391],
  [C3, 40, 178, 1551, 1220],
  [C3, 98, 281, 415, 476],
  [C3, 437, 256, 685, 385],
  [C3, 716, 251, 897, 457],
  [C3, 937, 238, 1371, 392],
  [C3, 145, 528, 405, 661],
  [C3, 424, 564, 779, 765],
  [C3, 152, 877, 545, 1099],
];

const BUBBLES: [Sector, number, number, string][] = [
  [C1, 1029, 460, 'Stick input'],
  [C1, 1143, 890, 'Mouse input'],
  [C1, 1143, 1063, 'Jump'],
  [C1, 637, 1274, 'Picking up and Tossing shit'],
  [C2, 152, 338, 'Crouch'],
  [C2, 202, 388, 'toggle for crouch'],
  [C2, 208, 562, 'hold button for crouch'],
  [C2, 110, 814, 'Movement input'],
  [C3, 98, 149, 'Line trace to find an applicable Physics Object'],
  [C3, 716, 118, 'Hit Conditions'],
  [C3, 437, 122, 'Get other object location'],
  [C2, 178, 1336, 'Add and grab physics handle'],
  [C3, 424, 429, 'Toss function'],
  [C3, 145, 394, 'Input that sets the physics handles active or not'],
  [C3, 176, 612, 'Player Caught Condition'],
  [C3, 152, 743, 'Sets pickup object location'],
];

function CharacterGraph() {
  return (
    <Panel className="mr-[60px] ml-[211px] aspect-[1593/969]" mark="BLUEPRINT" markClass="right-[13px] bottom-[18px] text-[81px]">
      <Grid id="grid-char" step={131} cells={8} x={528} y={420} />
      {BOXES.map(([s, x1, y1, x2, y2]) => (
        <div
          key={`${s.ox}-${x1}-${y1}`}
          className="absolute border-t-3 border-white/40 bg-white/30"
          style={{ left: px(s, x1), top: py(s, y1), width: px(s, x2) - px(s, x1), height: py(s, y2) - py(s, y1) }}
        />
      ))}
      <Wires
        s={C1}
        width={3}
        src={`w 628 876 683 830; w 714 829 742 836; w 772 842 800 843; w 822 843 828 722; w 860 722 882 832; w 900 838 948 838
          w 628 888 755 990; w 785 990 848 985; w 872 985 915 940; w 942 940 970 985
          w 1090 636 1180 642; w 1095 752 1180 760; w 1184 1075 1206 1075; w 1188 1140 1208 1140; w 1178 1243 1208 1241; w- 858 706 862 694; w- 1002 968 1006 958`}
      />
      <Wires
        s={C1}
        width={2}
        src={`b 776 895 880 857; b 776 895 855 1003; b 776 895 815 942; g 820 942 860 908; g 870 906 882 850; r 690 840 682 862
          g 1090 648 1130 670; g 1078 677 1130 674; g 1082 714 1130 680; g 1145 670 1180 662
          g 1095 764 1130 785; g 1078 792 1130 790; g 1076 830 1130 795; g 1145 788 1180 778`}
      />
      <Wires
        s={C2}
        width={3}
        src={`w 296 590 345 505; w 372 503 440 572; w 240 583 266 583; w 346 622 386 660; w 168 1050 178 940; w 206 940 206 1060
          w 236 1068 298 1075; w 326 1068 338 1016; w 366 1010 380 980; w 405 982 436 986; w 460 986 498 1003; w 366 1028 510 1136
          w 326 1090 342 1108; w 372 1112 392 1144; w 586 1116 588 1160; w 540 1132 558 1176; w 168 1270 200 1196; w 230 1196 290 1258
          w 318 1262 386 1270; w 414 1276 444 1310`}
      />
      <Wires
        s={C2}
        width={2}
        src={`g 166 1064 208 1090; y 160 1120 206 1088; g 166 1066 262 1080; r 280 1084 298 1088; r 320 1010 338 1024; g 284 995 306 1008
          g 280 1140 306 1114; r 322 1114 342 1124; g 276 1142 310 1152; g 296 1166 310 1154; g 322 1153 392 1155; g 480 1098 522 1070
          g 540 1070 586 1108; r 484 1146 512 1146; g 474 1140 474 1106; g 168 1282 290 1275; g 168 1284 290 1292; g 168 1280 358 1272
          y 166 1334 290 1288; r 372 1274 388 1278; g 385 1314 444 1318; g 388 1332 400 1320`}
      />
      <Wires
        s={C3}
        width={3}
        src={`w 265 568 298 325; w 325 322 612 298; w 634 300 642 334; w 664 332 742 295; w 772 297 850 290; w 880 290 990 292
          w 1018 292 1068 274; w 1094 274 1204 272; w 1230 273 1294 273; w 275 604 330 582; w 358 582 548 606; w 575 606 656 606
          w 684 604 800 528; w 575 615 690 688; w 690 688 800 530; w 192 911 340 918; w 368 918 400 918; w 425 918 480 916`}
      />
      <Wires
        s={C3}
        width={2}
        src={`b 136 370 164 345; b 136 372 168 390; y 190 348 296 332; y 190 348 256 380; y 272 382 298 345; B 325 332 730 352
          r 325 342 438 406; r 438 406 655 412; r 655 412 742 308; y 480 296 530 308; y 488 318 570 318; y 488 322 785 375; y 536 358 572 350
          y 546 310 566 318; g 594 322 614 300; q 600 350 645 340; r 852 305 872 370; g 815 385 860 382; y 875 382 1040 388
          y 1040 388 1204 310; b 760 430 960 403; b 960 403 1045 350; b 1045 350 1245 350; b 1245 350 1292 290; b 1100 350 1125 280
          b 1018 298 1070 280; p 760 440 1015 430; p 1015 430 1204 300; o 968 332 990 308; b 326 608 340 590; b- 632 600 740 495; b- 632 600 656 614
          b 775 460 800 525; y 656 640 656 690; y 594 712 648 696; b 566 732 575 716; r 552 620 565 656; t 298 365 345 418
          r 315 942 340 928; b 458 950 482 936; y 458 966 482 942; q 480 950 496 1005; y 275 1000 318 1024; q 192 1034 222 1038
          y 250 1040 274 1046; y 290 1044 318 1030; y 333 1026 355 1026; y 372 1024 400 930; g 248 1072 275 1052`}
      />
      {BUBBLES.map(([s, x, y, text]) => (
        <div
          key={text}
          className="absolute flex h-[34px] items-center rounded-[5px] border-2 border-white/70 bg-linear-to-b from-[#bebebe]/85 to-[#e2e2e2]/85 px-[11px] pt-px font-[Roboto,sans-serif] text-[16px] whitespace-nowrap text-[#505050]"
          style={{ left: px(s, x), top: py(s, y) }}
        >
          <span className="relative z-10">{text}</span>
          <svg className="absolute top-[32px] left-[9px] h-[7px] w-[10px]" viewBox="0 0 10 7" aria-hidden="true">
            <path d="M0 0h10L5 7z" fill="#dcdcdc" />
          </svg>
        </div>
      ))}
      <MiniNodes
        s={C1}
        src={`red 595 855 36 44; gray 681 806 35 36; pr 663 858 30 8; blue 739 805 35 45; mr 793 836 35 18; blue 825 700 36 82
          mg 876 829 28 24; mg 944 829 30 24; pb 750 890 30 8; blue 692 916 37 45; mr 755 982 32 20; mg 845 980 30 22; mg 855 902 20 14
          mg 808 937 24 10; mg 912 931 32 18; blue 968 964 36 82; red 1040 621 52 30; blue 1175 621 36 44; pg 1048 672 32 8; mg 1125 662 22 24
          green 1045 694 37 26; red 1040 736 56 30; blue 1175 737 36 48; pg 1048 788 32 8; mg 1125 778 22 22; green 1037 810 38 28
          red 1146 1062 40 30; blue 1203 1051 35 45; red 1146 1123 45 31; blue 1205 1112 36 46; red 1146 1223 36 46; blue 1205 1216 36 38`}
      />
      <MiniNodes
        s={C2}
        src={`red 208 560 34 48; gray 264 560 35 48; blue 339 478 35 84; blue 440 551 34 38; blue 313 602 35 84; blue 384 640 34 38
          blue 285 712 36 40; red 215 763 36 46; blue 276 771 35 40; blue 173 917 35 80; red 115 1039 55 30; blue 204 1044 34 62; green 127 1101 34 26
          pg 258 991 28 8; m 303 1005 22 14; gray 334 996 35 38; mg 376 970 30 24; mr 432 978 30 20; blue 496 982 34 46; gray 295 1056 34 38
          m 260 1075 25 14; gray 339 1094 35 40; m 303 1108 22 14; mg 388 1134 30 26; pg 248 1137 30 8; pg 268 1165 30 8; mg 305 1148 20 12
          mg 520 1064 22 12; mg 583 1092 28 26; mg 465 1094 20 14; m 468 1138 20 14; gray 508 1114 34 36; blue 556 1157 35 36; red 445 1185 46 35
          mr 485 1168 30 24; pg 466 1176 22 8; pg 502 1197 30 10; mr 496 1240 30 26; blue 197 1176 34 76; red 122 1259 50 28; blue 285 1240 35 62
          green 134 1318 34 24; gray 384 1248 34 38; m 355 1267 20 14; mg 440 1302 28 24; pg 355 1310 30 8; pg 360 1328 30 8; mg 395 1312 20 14`}
      />
      <MiniNodes
        s={C3}
        src={`green 158 323 34 27; green 162 373 34 27; pb 108 368 30 8; blue 294 301 33 94; my 252 372 22 18; my 220 393 20 18; pt 325 416 30 10
          pg 165 440 25 6; green 448 274 34 26; green 504 343 34 26; my 526 302 22 16; green 562 301 34 26; green 568 332 34 26; mg 610 286 27 24
          mb 640 324 26 26; gray 740 274 34 40; green 727 332 33 150; green 783 366 33 26; m 855 372 22 18; gray 848 271 34 36; green 936 317 34 28
          blue 986 269 34 45; mb 1066 262 30 26; mb 1120 262 28 26; pb 1163 283 30 9; red 1200 251 33 72; blue 1290 252 33 50; blue 798 500 34 57
          red 152 539 33 48; red 165 588 33 48; mr 237 556 30 24; mr 247 592 28 26; blue 326 558 33 37; pb 294 632 30 9; red 432 593 34 48
          red 430 671 33 43; mr 502 610 28 26; mr 506 660 28 26; gray 545 582 33 40; blue 652 582 33 62; pr 545 656 28 8; green 562 692 34 26
          my 645 686 20 20; pb 552 732 28 8; green 263 681 34 33; gray 222 776 34 42; pr 188 808 28 9; pb 272 804 30 9; mg 308 764 30 26
          red 164 894 32 32; gray 337 898 33 35; pr 288 938 28 9; my 397 906 30 26; blue 477 896 33 52; pb 433 946 30 8; py 430 962 30 8
          green 466 1006 33 28; green 245 980 34 27; green 162 1011 34 27; green 218 1019 34 26; my 270 1038 22 16; my 313 1018 22 18
          my 353 1018 22 18; pg 224 1069 28 8`}
      />
      <GraphHeader name="MyCharacter" zoom="Zoom -12" />
    </Panel>
  );
}

const L1: Sector = { ox: -8, oy: -37, sx: 0.4592, sy: 0.4464 };
const L2: Sector = { ox: 512, oy: 43, sx: 1 / 3, sy: 0.3954 };

function LevelGraph() {
  return (
    <Panel className="-mt-[115px] aspect-[1374/662] w-[73.7%]" mark="LEVEL BLUEPRINT" markClass="right-[9px] bottom-[15px] text-[70px]">
      <Grid id="grid-level" step={142} cells={8} x={598} y={642} />
      <Wires
        s={L1}
        width={2}
        dim
        src={`w 1070 690 1086 687; w 1114 686 1146 716; w- 1190 712 1180 664; w 1186 728 1224 702; r 1144 736 1150 852
          w 216 1044 308 1014; w 348 1015 436 1011; t 380 1019 434 1018; r 318 1024 306 1048; w 470 1015 530 960; w 470 1028 522 1046
          w 470 1034 556 1108; w 570 968 642 930; w 682 930 732 935; w- 472 966 905 1026; w- 530 962 472 966; w 840 1033 903 1030
          w 765 1048 810 1034; w 560 1052 725 1052; b 530 896 642 934; b 634 1035 726 1052; w- 475 1046 1062 1068; w 978 1068 1062 1068
          w 895 1070 938 1070; w 826 1128 870 1070; w 706 1138 784 1130; w 595 1118 666 1138; b 550 1150 668 1147; b 945 1075 948 1114
          r 537 975 544 1008; r 528 1062 540 1073; r 545 1114 556 1112
          w 1048 1258 1143 1258; w 1048 1303 1143 1258; w 928 1333 1143 1258; w 928 1383 1143 1258; w 1058 1358 1143 1258; w 1024 1407 1143 1258
          w 914 1427 1143 1258; w 908 1487 1143 1258; w 1176 1496 1200 1493; w 1236 1492 1302 1492; b 1236 1500 1302 1500`}
      />
      <Wires
        s={L2}
        width={2}
        dim
        src={`w 338 128 418 188; w 418 140 420 180; w 540 116 576 107; w 472 190 624 180; r 340 202 420 198; b 600 214 628 188; w 680 180 820 97
          t 680 90 740 100; t 740 100 820 102; w 862 97 996 134; b 868 214 970 212; b 970 212 996 145; w 1052 134 1145 129; w 1200 129 1252 129
          w 1306 129 1348 129; b 1140 186 1150 140; b 1185 203 1252 140
          w 225 266 370 337; w 370 288 374 335; w 582 308 604 298; r 350 343 372 345; w 428 338 618 386; b 565 416 620 396; w 676 386 815 302
          t 685 324 715 306; t 735 306 815 308; w 858 302 998 336; w 1052 337 1145 337; w 1200 337 1252 331; w 1306 331 1354 343; b 935 414 945 374
          b 980 370 998 350; b 1140 387 1150 348; b 1185 405 1252 344
          w 315 500 412 533; w 405 505 412 530; w 540 470 604 461; r 380 554 412 545; w 468 535 572 600; b 525 608 572 608; w 628 600 770 518
          t 680 521 768 522; w 812 515 910 506; b 805 564 908 515; b- 805 566 930 584; b- 930 584 915 592; w 968 505 1112 478; w 1165 478 1218 467; w 1272 467 1340 512
          b 1115 512 1120 488; b 1115 528 1218 475
          w 214 786 264 786; w 322 780 332 680; w 320 796 378 787; r 240 857 262 800; w 340 938 412 960; w 468 958 604 821; w 465 972 538 982
          r 388 1031 408 975; w 660 823 718 841; w 775 840 818 821; w 594 983 650 1004; w 706 1004 750 983; w 400 1171 518 1140; w 572 1139 730 1084
          w 572 1150 670 1146; r 495 1200 516 1152; w 405 1253 478 1302; w 380 1298 478 1303; w 368 1361 478 1303; w 535 1301 630 1264
          w 535 1313 630 1314; r 440 1347 474 1315; w 1095 1122 1198 1122; w 1250 1122 1310 1122; w 1100 1224 1205 1224; w 1260 1224 1318 1224
          w 1294 1399 1398 1414; w 1452 1415 1548 1415`}
      />
      <MiniNodes
        s={L1}
        src={`red 988 679 86 31; mr 1083 680 34 18; gray 1143 704 44 32; blue 1172 599 44 64; blue 1220 684 45 64; pr 1116 851 36 6
          red 174 1027 45 38; red 257 998 44 37; gray 305 997 45 30; pr 288 1046 36 6; pt 375 1016 40 6; yel 431 992 44 58; gray 528 942 44 30
          gray 518 1027 44 30; gray 552 1092 44 30; pr 515 1007 38 6; pr 521 1072 38 6; pr 507 1111 38 6; blue 639 912 45 36; mr 728 928 38 18
          pb 492 894 38 6; pb 590 1033 44 6; blue 722 1032 45 36; mr 807 1027 38 18; mr 866 1063 36 18; blue 935 1052 44 30; pb 908 1112 44 6
          pb 513 1148 44 6; blue 663 1122 45 36; blue 780 1111 45 64; red 1007 1242 44 36; red 1007 1286 44 36; red 885 1316 45 38; red 885 1365 46 38
          red 1017 1342 45 37; red 983 1390 45 38; red 871 1411 46 37; red 867 1470 45 38; mr 1140 1250 38 18; red 1132 1484 44 17
          blue 1197 1474 44 36; blue 1297 1474 44 36`}
      />
      <MiniNodes
        s={L2}
        src={`red 280 110 63 43; red 360 121 62 43; red 421 102 125 36; mr 574 98 46 20; gray 415 170 61 35; pr 290 198 50 6; blue 620 160 63 35
          pb 552 212 50 6; pt 652 87 46 6; mg 715 94 28 12; mg 818 88 48 20; blue 993 115 63 41; pb 818 211 50 6; blue 1140 110 62 32
          blue 1247 110 62 32; pb 1085 183 60 6; pb 1126 202 60 6; mr 1345 122 48 18
          red 166 244 64 43; red 313 267 64 43; red 461 294 126 36; mr 600 290 48 20; gray 368 318 62 35; pr 310 340 50 6; blue 614 368 63 32
          pb 512 415 54 6; pt 652 322 46 6; mg 706 300 34 12; mg 812 294 48 20; blue 993 317 63 41; pb 880 414 60 6; pb 940 370 44 6
          blue 1140 317 62 32; blue 1247 312 62 32; pb 1085 386 60 6; pb 1126 404 60 6; mr 1352 336 50 18
          red 253 481 64 43; red 346 487 64 43; red 421 457 126 36; mr 600 453 48 18; gray 408 514 62 35; pr 331 553 50 6; blue 568 581 62 33
          pb 466 606 60 6; mg 656 514 34 12; mg 766 510 48 18; blue 907 487 63 37; pb 858 589 60 6; blue 1107 459 62 32; blue 1214 447 62 32
          pb 1058 511 60 6; pb 1058 528 60 6; mr 1338 503 50 20
          blue 327 660 63 72; red 93 772 124 34; gray 261 767 62 35; blue 374 767 63 72; pr 190 856 50 6; red 220 924 124 35; gray 408 942 62 34
          pr 337 1030 50 6; blue 600 800 63 73; blue 714 823 63 31; blue 814 800 63 73; blue 534 963 63 73; blue 647 986 63 31; blue 747 963 63 73
          red 280 1159 124 36; gray 514 1121 63 35; pr 444 1199 50 6; blue 726 1064 64 73; blue 667 1126 64 73; red 288 1238 122 36
          red 260 1283 122 36; red 247 1351 122 36; gray 474 1284 63 35; blue 627 1243 63 42; blue 627 1294 63 42; pr 392 1346 50 6
          blue 1033 1104 64 72; blue 1194 1104 63 32; blue 1307 1104 63 72; blue 1040 1205 64 72; blue 1201 1205 63 33; blue 1314 1205 63 72
          red 1121 1395 120 34; blue 1234 1378 62 74; blue 1395 1396 62 32; blue 1546 1396 60 36
          red 1587 445 123 36; blue 1767 424 63 40; pb 1692 484 62 6`}
      />
      <GraphHeader name="playTestLevel" zoom="Zoom -11" compact />
    </Panel>
  );
}

export default function App() {
  return (
    <main className="grid min-h-screen grid-cols-[1328fr_1864fr] items-start overflow-hidden bg-black font-[Roboto,sans-serif]">
      <div className="flex min-w-0 flex-col pt-[53px]">
        <AiBlueprint />
        <BehaviorTree />
        <ServiceBlueprint />
      </div>
      <div className="flex min-w-0 flex-col pt-[83px]">
        <CharacterGraph />
        <LevelGraph />
      </div>
    </main>
  );
}
